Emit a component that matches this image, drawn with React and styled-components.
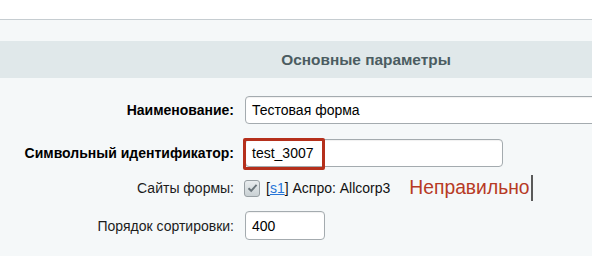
import styled, { createGlobalStyle } from "styled-components";

const GlobalStyle = createGlobalStyle`
	html, body {
		margin: 0;
		padding: 0;
		background: #f5f8f9;
		overflow: hidden;
	}
	body {
		font-family: "Liberation Sans", Arial, sans-serif;
		font-size: 14px;
		color: #000;
	}
`;

const Page = styled.div`
	width: 100%;
	height: 256px;
	background: #f5f8f9;
	overflow: hidden;
`;

const TopBar = styled.div`
	height: 19px;
	background: #fff;
	border-bottom: 1px solid #c6cdd1;
`;

const Section = styled.div`
	margin-top: 21px;
	height: 37px;
	padding-left: 140px;
	background: #e0e8ea;
	display: flex;
	align-items: center;
	justify-content: center;
	font-weight: bold;
	font-size: 15.4px;
	color: #4b5c61;
`;

const Form = styled.div`
	padding-top: 18px;
	display: flex;
	flex-direction: column;
`;

const Row = styled.div`
	display: grid;
	grid-template-columns: 234px 1fr;
	column-gap: 11px;
	align-items: center;
	height: ${(p) => p.$height}px;
	margin-bottom: ${(p) => p.$after || 0}px;
`;

const Label = styled.div`
	text-align: right;
	font-weight: ${(p) => (p.$bold ? "bold" : "normal")};
	color: ${(p) => (p.$bold ? "#000" : "#1c1c1c")};
	white-space: nowrap;
`;

const Field = styled.div`
	display: flex;
	align-items: center;
	position: relative;
	min-width: 0;
	overflow: ${(p) => (p.$clip ? "hidden" : "visible")};
`;

const Input = styled.div`
	box-sizing: border-box;
	flex: none;
	width: ${(p) => p.$width}px;
	height: ${(p) => p.$h || 28}px;
	background: #fff;
	border: 1px solid #a4abaf;
	border-radius: 4px;
	box-shadow: inset 0 1px 1px rgba(0, 0, 0, 0.06);
	padding-left: 6px;
	display: flex;
	align-items: center;
	font-size: 14px;
	color: #000;
	white-space: nowrap;
`;

const Highlight = styled.div`
	position: absolute;
	left: -2px;
	top: -1px;
	width: 82px;
	height: 32px;
	box-sizing: border-box;
	border: 3px solid #b5301c;
	border-radius: 2px;
	pointer-events: none;
`;

const Checkbox = styled.span`
	box-sizing: border-box;
	width: 16px;
	height: 17px;
	margin-left: -1px;
	border: 1px solid #98a0a4;
	border-radius: 3px;
	background: linear-gradient(#e9edef, #c9d1d4);
	display: inline-flex;
	align-items: center;
	justify-content: center;
	margin-right: 6px;
`;

const Sites = styled.span`
	font-size: 14px;
	color: #111;
`;

const SiteLink = styled.a`
	color: #2675d7;
	text-decoration: underline;
`;

const Error = styled.span`
	margin-left: 19px;
	font-size: 19.3px;
	color: #b73a25;
	display: inline-flex;
	align-items: center;
`;

const Caret = styled.span`
	display: inline-block;
	width: 2px;
	height: 26px;
	background: #5a5a5a;
	margin-left: 1px;
`;

export default function App() {
	return (
		<Page>
			<GlobalStyle />
			<TopBar />
			<Section>Основные параметры</Section>
			<Form>
				<Row $height={28} $after={15}>
					<Label $bold>Наименование:</Label>
					<Field $clip>
						<Input $width={420}>Тестовая форма</Input>
					</Field>
				</Row>
				<Row $height={28} $after={7}>
					<Label $bold>Символьный идентификатор:</Label>
					<Field>
						<Input $width={258}>test_3007</Input>
						<Highlight />
					</Field>
				</Row>
				<Row $height={28} $after={9}>
					<Label>Сайты формы:</Label>
					<Field>
						<Checkbox>
							<svg width="11" height="10" viewBox="0 0 11 10">
								<path
									d="M1.5 5.2 L4.2 7.8 L9.6 1.8"
									fill="none"
									stroke="#6a757b"
									strokeWidth="1.9"
								/>
							</svg>
						</Checkbox>
						<Sites>
							[<SiteLink>s1</SiteLink>] Аспро: Allcorp3
						</Sites>
						<Error>
							Неправильно
							<Caret />
						</Error>
					</Field>
				</Row>
				<Row $height={29}>
					<Label>Порядок сортировки:</Label>
					<Field>
						<Input $width={80} $h={29}>
							400
						</Input>
					</Field>
				</Row>
			</Form>
		</Page>
	);
}
